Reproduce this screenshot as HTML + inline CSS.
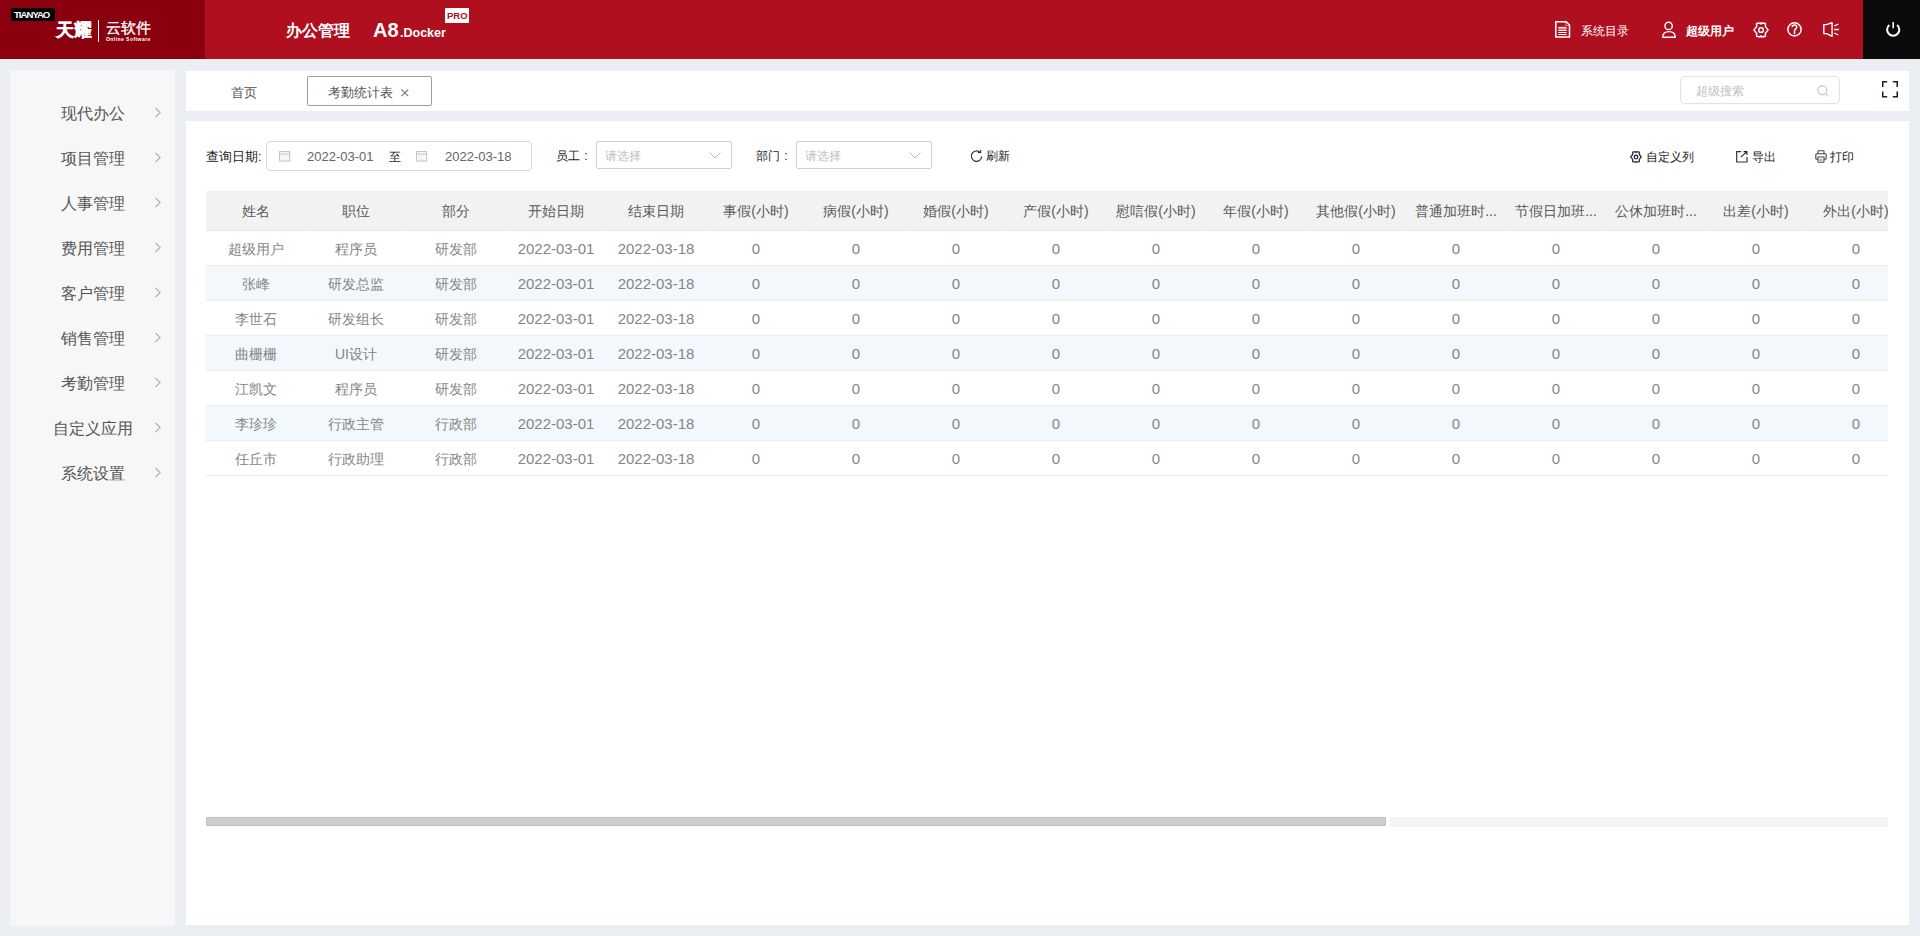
<!DOCTYPE html>
<html><head><meta charset="utf-8">
<style>
*{box-sizing:border-box;margin:0;padding:0}
html,body{width:1920px;height:936px;overflow:hidden}
body{background:#ebeef2;font-family:"Liberation Sans",sans-serif;position:relative;color:#666}
.a{position:absolute;white-space:nowrap}
#hdr{left:0;top:0;width:1920px;height:59px;background:#b00f20}
#logo{left:0;top:0;width:205px;height:59px;background:#8a000f}
#pwr{left:1863px;top:0;width:57px;height:59px;background:#0b0b0b}
.w{color:#fff}
#side{left:10px;top:70px;width:165px;height:856px;background:#f7f7f7}
.mi{position:absolute;left:0;width:165px;height:30px;font-size:16px;color:#555;white-space:nowrap}
.mi span{position:absolute;left:0;width:165px;text-align:center;top:1px;line-height:30px}
#tabs{left:186px;top:71px;width:1723px;height:40px;background:#fff}
#main{left:186px;top:121px;width:1723px;height:804px;background:#fff}
.t13{font-size:13px;line-height:16px}
.t12{font-size:12px;line-height:16px}
.box{position:absolute;border:1px solid #dcdfe6;background:#fff}
table{border-collapse:collapse;table-layout:fixed}
#tbl{left:206px;top:191px;width:1682px;height:290px;overflow:hidden}
#tbl table{width:1700px}
#tbl td,#tbl th{width:100px;text-align:center;white-space:nowrap;overflow:hidden;font-size:14px;font-weight:normal;padding:4px 0 0 0}
#tbl th{height:39px;background:#f2f2f2;color:#5a5a5a;border-right:1px solid #eeeeee;border-bottom:1px solid #e8e8e8}
#tbl td{height:35px;color:#858585;border-bottom:1px solid #ebeef0}
#tbl td.n{font-size:15px;padding-top:1px}
#tbl tr.s td{background:#f2f8fc}
svg{position:absolute;overflow:visible}
</style></head><body>
<div id="hdr" class="a"></div>
<div id="logo" class="a"></div>
<div id="pwr" class="a"></div>

<!-- logo -->
<div class="a" style="left:11px;top:8px;width:44px;height:13px;background:#000"></div>
<div class="a w" style="left:14px;top:9px;font-size:9.6px;line-height:11px;font-weight:bold;letter-spacing:-1px">TIANYAO</div>
<div class="a w" style="left:56px;top:19px;font-size:18px;line-height:22px;font-weight:bold;-webkit-text-stroke:0.35px #fff">天耀</div>
<div class="a" style="left:98px;top:20px;width:1px;height:22px;background:#fff"></div>
<div class="a w" style="left:106px;top:19px;font-size:15px;line-height:18px;-webkit-text-stroke:0.3px #fff">云软件</div>
<div class="a w" style="left:106px;top:36px;font-size:5px;line-height:6px;font-weight:bold;letter-spacing:0.45px">Online Software</div>

<div class="a w" style="left:286px;top:22px;font-size:16px;line-height:18px;font-weight:bold">办公管理</div>
<div class="a w" style="left:373px;top:19px;font-size:20px;line-height:22px;font-weight:bold">A8</div>
<div class="a w" style="left:400px;top:26px;font-size:12.5px;line-height:14px;font-weight:bold">.Docker</div>
<div class="a" style="left:445px;top:8px;width:24px;height:15px;background:#fff"></div>
<div class="a" style="left:447px;top:10px;font-size:9.5px;line-height:11px;font-weight:bold;color:#b00f20">PRO</div>

<!-- header right -->
<svg style="left:1555px;top:21px" width="16" height="17" viewBox="0 0 16 17"><path d="M0.8 0.8H11.2L14.5 4.1V16.1H0.8Z" fill="none" stroke="#fff" stroke-width="1.5"/><path d="M10.5 1.5V4.5H13.8" fill="none" stroke="#fff" stroke-width="0.8" opacity="0.6"/><path d="M3.3 6.4H11.7M3.3 7.9H11.7M3.3 9.5H11.7M3.3 11.5H11.7M3.3 13.5H11.7" stroke="#fff" stroke-width="1"/></svg>
<div class="a w t12" style="left:1581px;top:23px;font-size:12.4px">系统目录</div>
<svg style="left:1662px;top:22px" width="15" height="17" viewBox="0 0 15 17"><circle cx="6.6" cy="3.9" r="3.7" fill="none" stroke="#fff" stroke-width="1.4"/><path d="M0.8 15.2C0.8 11.4 3.4 9.6 7 9.6S13.2 11.4 13.2 15.2Z" fill="none" stroke="#fff" stroke-width="1.4"/></svg>
<div class="a w t12" style="left:1686px;top:23px;font-weight:bold">超级用户</div>
<svg style="left:1753px;top:22px" width="16" height="16" viewBox="0 0 16 16"><path d="M0.9 7.9L3.6 4.6V1.6L7 0.9L8 1.9L9 0.9L12.4 1.6V4.6L15.1 7.9L12.4 11.2V14.2L9 14.9L8 13.9L7 14.9L3.6 14.2V11.2Z" fill="none" stroke="#fff" stroke-width="1.5" stroke-linejoin="round"/><rect x="5.8" y="5.8" width="4.4" height="4.4" rx="1.8" fill="none" stroke="#fff" stroke-width="1.5"/></svg>
<svg style="left:1787px;top:22px" width="15" height="15" viewBox="0 0 15 15"><circle cx="7.5" cy="7.4" r="6.6" fill="none" stroke="#fff" stroke-width="1.5"/><path d="M5.2 5.3C5.2 3.8 6.2 3.1 7.5 3.1S9.7 3.9 9.7 5.1C9.7 6.8 7.5 7 7.5 9V12.2" fill="none" stroke="#fff" stroke-width="1.5"/></svg>
<svg style="left:1823px;top:22px" width="17" height="16" viewBox="0 0 17 16"><path d="M0.8 2.6H3.6L9.1 0.7V14.4L3.6 11.6H0.8Z" fill="none" stroke="#fff" stroke-width="1.4" stroke-linejoin="round"/><path d="M11.2 4L15.3 2.2M11.2 7.5H16M11.2 11L15.3 13" stroke="#fff" stroke-width="1.3"/></svg>
<svg style="left:1886px;top:22px" width="15" height="16" viewBox="0 0 15 16"><path d="M3.3 2.9A6.1 6.1 0 1 0 11.1 2.9" fill="none" stroke="#fff" stroke-width="2"/><path d="M7.2 0V6.2" stroke="#fff" stroke-width="1.6"/></svg>

<div id="side" class="a">
<div class="mi" style="top:28px"><span>现代办公</span><svg style="left:144px;top:9px" width="8" height="11" viewBox="0 0 8 11"><path d="M1.5 1L6.2 5.5L1.5 10" fill="none" stroke="#b0b0b0" stroke-width="1.1"/></svg></div>
<div class="mi" style="top:73px"><span>项目管理</span><svg style="left:144px;top:9px" width="8" height="11" viewBox="0 0 8 11"><path d="M1.5 1L6.2 5.5L1.5 10" fill="none" stroke="#b0b0b0" stroke-width="1.1"/></svg></div>
<div class="mi" style="top:118px"><span>人事管理</span><svg style="left:144px;top:9px" width="8" height="11" viewBox="0 0 8 11"><path d="M1.5 1L6.2 5.5L1.5 10" fill="none" stroke="#b0b0b0" stroke-width="1.1"/></svg></div>
<div class="mi" style="top:163px"><span>费用管理</span><svg style="left:144px;top:9px" width="8" height="11" viewBox="0 0 8 11"><path d="M1.5 1L6.2 5.5L1.5 10" fill="none" stroke="#b0b0b0" stroke-width="1.1"/></svg></div>
<div class="mi" style="top:208px"><span>客户管理</span><svg style="left:144px;top:9px" width="8" height="11" viewBox="0 0 8 11"><path d="M1.5 1L6.2 5.5L1.5 10" fill="none" stroke="#b0b0b0" stroke-width="1.1"/></svg></div>
<div class="mi" style="top:253px"><span>销售管理</span><svg style="left:144px;top:9px" width="8" height="11" viewBox="0 0 8 11"><path d="M1.5 1L6.2 5.5L1.5 10" fill="none" stroke="#b0b0b0" stroke-width="1.1"/></svg></div>
<div class="mi" style="top:298px"><span>考勤管理</span><svg style="left:144px;top:9px" width="8" height="11" viewBox="0 0 8 11"><path d="M1.5 1L6.2 5.5L1.5 10" fill="none" stroke="#b0b0b0" stroke-width="1.1"/></svg></div>
<div class="mi" style="top:343px"><span>自定义应用</span><svg style="left:144px;top:9px" width="8" height="11" viewBox="0 0 8 11"><path d="M1.5 1L6.2 5.5L1.5 10" fill="none" stroke="#b0b0b0" stroke-width="1.1"/></svg></div>
<div class="mi" style="top:388px"><span>系统设置</span><svg style="left:144px;top:9px" width="8" height="11" viewBox="0 0 8 11"><path d="M1.5 1L6.2 5.5L1.5 10" fill="none" stroke="#b0b0b0" stroke-width="1.1"/></svg></div>
</div>

<div id="tabs" class="a"></div>
<div id="main" class="a"></div>

<!-- tab bar -->
<div class="a t13" style="left:231px;top:85px;color:#555">首页</div>
<div class="box" style="left:307px;top:76px;width:125px;height:30px;border-color:#a0a0a0;border-radius:2px"></div>
<div class="a t13" style="left:328px;top:85px;color:#555">考勤统计表</div>
<svg style="left:401px;top:88.5px" width="8" height="8" viewBox="0 0 8 8"><path d="M0.5 0.5L7.2 7.2M7.2 0.5L0.5 7.2" stroke="#7a7a7a" stroke-width="1.1"/></svg>
<div class="box" style="left:1680px;top:76px;width:160px;height:28px;border-radius:5px;border-color:#e2e2e2"></div>
<div class="a t12" style="left:1696px;top:83px;color:#c0c0c0">超级搜索</div>
<svg style="left:1817px;top:85px" width="12" height="12" viewBox="0 0 12 12"><circle cx="5.3" cy="5.3" r="4.5" fill="none" stroke="#c8c8c8" stroke-width="1.2"/><path d="M8.6 8.6L11 11" stroke="#c8c8c8" stroke-width="1.2"/></svg>
<svg style="left:1882px;top:81px" width="17" height="17" viewBox="0 0 17 17"><path d="M0.75 6V0.75H5.2M10.8 0.75H15.25V6M15.25 10.5V15.75H10.8M5.2 15.75H0.75V10.5" fill="none" stroke="#1c1c30" stroke-width="1.5"/></svg>

<!-- filter row -->
<div class="a t13" style="left:206px;top:149px;color:#222;font-size:12.6px">查询日期:</div>
<div class="box" style="left:266px;top:141px;width:266px;height:30px;border-radius:4px;border-color:#d9d9d9"></div>
<svg style="left:279px;top:150.5px" width="12" height="12" viewBox="0 0 12 12"><rect x="0.6" y="0.6" width="10" height="9.4" fill="none" stroke="#c4c4c4" stroke-width="1.1"/><path d="M0.6 3H10.6" stroke="#c4c4c4" stroke-width="1.1"/><path d="M2.8 5H3.8M5 5H6M7.3 5H8.3M2.8 7.9H3.8M5 7.9H6M7.3 7.9H8.3" stroke="#d0d0d0" stroke-width="1"/></svg>
<div class="a t13" style="left:307px;top:149px;color:#666">2022-03-01</div>
<div class="a t13" style="left:389px;top:149px;color:#222;font-size:12px">至</div>
<svg style="left:416px;top:150.5px" width="12" height="12" viewBox="0 0 12 12"><rect x="0.6" y="0.6" width="10" height="9.4" fill="none" stroke="#c4c4c4" stroke-width="1.1"/><path d="M0.6 3H10.6" stroke="#c4c4c4" stroke-width="1.1"/><path d="M2.8 5H3.8M5 5H6M7.3 5H8.3M2.8 7.9H3.8M5 7.9H6M7.3 7.9H8.3" stroke="#d0d0d0" stroke-width="1"/></svg>
<div class="a t13" style="left:445px;top:149px;color:#666">2022-03-18</div>

<div class="a t12" style="left:556px;top:148px;color:#222">员工 <span style="margin-left:1px">:</span></div>
<div class="box" style="left:596px;top:141px;width:136px;height:28px;border-radius:2px;border-color:#d0d0d0"></div>
<div class="a t12" style="left:605px;top:148px;color:#c0c0c0">请选择</div>
<svg style="left:709px;top:152px" width="12" height="7" viewBox="0 0 12 7"><path d="M0.5 0.5L6 6L11.5 0.5" fill="none" stroke="#bbb" stroke-width="1"/></svg>
<div class="a t12" style="left:756px;top:148px;color:#222">部门 <span style="margin-left:1px">:</span></div>
<div class="box" style="left:796px;top:141px;width:136px;height:28px;border-radius:2px;border-color:#d0d0d0"></div>
<div class="a t12" style="left:805px;top:148px;color:#c0c0c0">请选择</div>
<svg style="left:909px;top:152px" width="12" height="7" viewBox="0 0 12 7"><path d="M0.5 0.5L6 6L11.5 0.5" fill="none" stroke="#bbb" stroke-width="1"/></svg>
<svg style="left:970px;top:150px" width="13" height="13" viewBox="0 0 13 13"><path d="M10.3 2.6A5.2 5.2 0 1 0 11.7 6.5" fill="none" stroke="#333" stroke-width="1.2"/><path d="M7.8 2.4L10.6 2.6L10.8 0" fill="none" stroke="#333" stroke-width="1.1"/></svg>
<div class="a t12" style="left:986px;top:148px;color:#222">刷新</div>

<svg style="left:1630px;top:151px" width="12" height="12" viewBox="0 0 16 16"><path d="M0.9 7.9L3.6 4.6V1.6L7 0.9L8 1.9L9 0.9L12.4 1.6V4.6L15.1 7.9L12.4 11.2V14.2L9 14.9L8 13.9L7 14.9L3.6 14.2V11.2Z" fill="none" stroke="#333" stroke-width="1.8" stroke-linejoin="round"/><circle cx="8" cy="8" r="2.4" fill="none" stroke="#333" stroke-width="1.8"/></svg>
<div class="a t12" style="left:1646px;top:149px;color:#222">自定义列</div>
<svg style="left:1736px;top:150.5px" width="12" height="12" viewBox="0 0 12 12"><path d="M5.2 0.7H0.7V11H11V6" fill="none" stroke="#333" stroke-width="1.2"/><path d="M4.8 6.2L10.9 0.6M7.6 0.6H10.9V3.9" fill="none" stroke="#222" stroke-width="1.1"/></svg>
<div class="a t12" style="left:1752px;top:149px;color:#222">导出</div>
<svg style="left:1815px;top:150px" width="12" height="13" viewBox="0 0 12 13"><path d="M3 3.8V1.6Q3 0.8 3.8 0.8H8.2Q9 0.8 9 1.6V3.8M3 9.2H1.8Q0.8 9.2 0.8 8.2V4.8Q0.8 3.8 1.8 3.8H10.2Q11.2 3.8 11.2 4.8V8.2Q11.2 9.2 10.2 9.2H9" fill="none" stroke="#444" stroke-width="1.1"/><path d="M3 7H9V11.4Q9 12.2 8.2 12.2H3.8Q3 12.2 3 11.4Z" fill="none" stroke="#444" stroke-width="1.1"/><path d="M4.5 10H7.5" stroke="#555" stroke-width="1"/></svg>
<div class="a t12" style="left:1830px;top:149px;color:#222">打印</div>

<div id="tbl" class="a">
<table>
<tr><th>姓名</th><th>职位</th><th>部分</th><th>开始日期</th><th>结束日期</th><th>事假(小时)</th><th>病假(小时)</th><th>婚假(小时)</th><th>产假(小时)</th><th>慰唁假(小时)</th><th>年假(小时)</th><th>其他假(小时)</th><th>普通加班时...</th><th>节假日加班...</th><th>公休加班时...</th><th>出差(小时)</th><th>外出(小时)</th></tr>
<tr><td>超级用户</td><td>程序员</td><td>研发部</td><td class="n">2022-03-01</td><td class="n">2022-03-18</td><td class="n">0</td><td class="n">0</td><td class="n">0</td><td class="n">0</td><td class="n">0</td><td class="n">0</td><td class="n">0</td><td class="n">0</td><td class="n">0</td><td class="n">0</td><td class="n">0</td><td class="n">0</td></tr>
<tr class="s"><td>张峰</td><td>研发总监</td><td>研发部</td><td class="n">2022-03-01</td><td class="n">2022-03-18</td><td class="n">0</td><td class="n">0</td><td class="n">0</td><td class="n">0</td><td class="n">0</td><td class="n">0</td><td class="n">0</td><td class="n">0</td><td class="n">0</td><td class="n">0</td><td class="n">0</td><td class="n">0</td></tr>
<tr><td>李世石</td><td>研发组长</td><td>研发部</td><td class="n">2022-03-01</td><td class="n">2022-03-18</td><td class="n">0</td><td class="n">0</td><td class="n">0</td><td class="n">0</td><td class="n">0</td><td class="n">0</td><td class="n">0</td><td class="n">0</td><td class="n">0</td><td class="n">0</td><td class="n">0</td><td class="n">0</td></tr>
<tr class="s"><td>曲栅栅</td><td>UI设计</td><td>研发部</td><td class="n">2022-03-01</td><td class="n">2022-03-18</td><td class="n">0</td><td class="n">0</td><td class="n">0</td><td class="n">0</td><td class="n">0</td><td class="n">0</td><td class="n">0</td><td class="n">0</td><td class="n">0</td><td class="n">0</td><td class="n">0</td><td class="n">0</td></tr>
<tr><td>江凯文</td><td>程序员</td><td>研发部</td><td class="n">2022-03-01</td><td class="n">2022-03-18</td><td class="n">0</td><td class="n">0</td><td class="n">0</td><td class="n">0</td><td class="n">0</td><td class="n">0</td><td class="n">0</td><td class="n">0</td><td class="n">0</td><td class="n">0</td><td class="n">0</td><td class="n">0</td></tr>
<tr class="s"><td>李珍珍</td><td>行政主管</td><td>行政部</td><td class="n">2022-03-01</td><td class="n">2022-03-18</td><td class="n">0</td><td class="n">0</td><td class="n">0</td><td class="n">0</td><td class="n">0</td><td class="n">0</td><td class="n">0</td><td class="n">0</td><td class="n">0</td><td class="n">0</td><td class="n">0</td><td class="n">0</td></tr>
<tr><td>任丘市</td><td>行政助理</td><td>行政部</td><td class="n">2022-03-01</td><td class="n">2022-03-18</td><td class="n">0</td><td class="n">0</td><td class="n">0</td><td class="n">0</td><td class="n">0</td><td class="n">0</td><td class="n">0</td><td class="n">0</td><td class="n">0</td><td class="n">0</td><td class="n">0</td><td class="n">0</td></tr>
</table>
</div>

<!-- scrollbar -->
<div class="a" style="left:1390px;top:817px;width:498px;height:10px;background:#f4f4f4"></div>
<div class="a" style="left:206px;top:817px;width:1180px;height:9px;background:#cfcfcf;border:1px solid #bdbdbd;border-radius:1px"></div>

</body></html>
